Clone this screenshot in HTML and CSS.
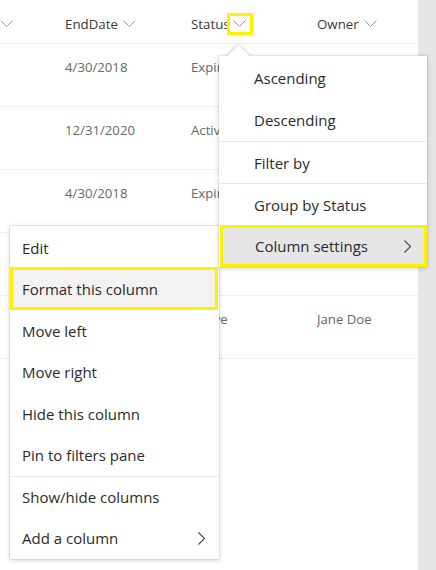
FILE: index.html
```html
<!DOCTYPE html>
<html>
<head>
<meta charset="utf-8">
<link rel="stylesheet" href="styles.css">
</head>
<body>
<div class="page">
  <div class="list">
    <div class="row head">
      <div class="cell first"><svg class="chev" viewBox="0 0 13 7"><polyline points="0.5,0.5 6.5,6.5 12.5,0.5"/></svg></div>
      <div class="cell">EndDate<svg class="chev" viewBox="0 0 13 7"><polyline points="0.5,0.5 6.5,6.5 12.5,0.5"/></svg></div>
      <div class="cell">Status<span class="hl-chev"><svg class="chev" viewBox="0 0 13 7"><polyline points="0.5,0.5 6.5,6.5 12.5,0.5"/></svg></span></div>
      <div class="cell">Owner<svg class="chev" viewBox="0 0 13 7"><polyline points="0.5,0.5 6.5,6.5 12.5,0.5"/></svg></div>
    </div>
    <div class="row data"><div class="cell first"></div><div class="cell">4/30/2018</div><div class="cell">Expired</div><div class="cell"></div></div>
    <div class="row data"><div class="cell first"></div><div class="cell">12/31/2020</div><div class="cell">Active</div><div class="cell"></div></div>
    <div class="row data"><div class="cell first"></div><div class="cell">4/30/2018</div><div class="cell">Expired</div><div class="cell"></div></div>
    <div class="row data"><div class="cell first"></div><div class="cell"></div><div class="cell"></div><div class="cell"></div></div>
    <div class="row data"><div class="cell first"></div><div class="cell"></div><div class="cell">Active</div><div class="cell">Jane Doe</div></div>
  </div>
  <div class="side"></div>

  <div class="menu menu-sort">
    <div class="beak"></div>
    <div class="items">
      <div class="item">Ascending</div>
      <div class="item">Descending</div>
      <div class="item sep">Filter by</div>
      <div class="item sep">Group by Status</div>
      <div class="item active">Column settings<svg class="sub" viewBox="0 0 7 13"><polyline points="0.5,0.5 6.5,6.5 0.5,12.5"/></svg></div>
    </div>
  </div>

  <div class="menu menu-col">
    <div class="item">Edit</div>
    <div class="item focus">Format this column</div>
    <div class="item">Move left</div>
    <div class="item">Move right</div>
    <div class="item">Hide this column</div>
    <div class="item">Pin to filters pane</div>
    <div class="item sep">Show/hide columns</div>
    <div class="item">Add a column<svg class="sub" viewBox="0 0 7 13"><polyline points="0.5,0.5 6.5,6.5 0.5,12.5"/></svg></div>
  </div>
</div>
</body>
</html>
```
FILE: styles.css
```css
html, body {
  margin: 0;
  padding: 0;
  background: #fff;
}
body {
  font-family: "Open Sans", "Noto Sans", sans-serif;
  font-size: 14px;
}
.page {
  position: relative;
  display: flex;
  width: 436px;
  height: 570px;
  overflow: hidden;
}
.list {
  width: 418px;
  flex: none;
}
.side {
  flex: 1;
  background: #e6e6e6;
}
.row {
  display: grid;
  grid-template-columns: 65px 126px 126px 101px;
  border-bottom: 1px solid #eeeeee;
  box-sizing: border-box;
}
.row.head {
  height: 44px;
  align-items: center;
  color: #3a3a3a;
  font-size: 13.3px;
  padding-top: 4px;
}
.row.data {
  height: 63px;
  color: #686868;
  font-size: 13.2px;
  padding-top: 13px;
  line-height: 20px;
}
.cell {
  display: flex;
  align-items: center;
  white-space: nowrap;
  overflow: hidden;
}
.row.data .cell {
  align-items: flex-start;
}
.chev {
  width: 13px;
  height: 7px;
  margin-left: 5px;
  fill: none;
  stroke: #999;
  stroke-width: 1;
}
.first .chev {
  margin-left: 0;
}
.hl-chev {
  display: inline-flex;
  align-items: center;
  justify-content: center;
  width: 26px;
  height: 22px;
  box-sizing: border-box;
  border: 3px solid #fff200;
  margin-left: -3px;
}
.hl-chev .chev {
  margin-left: 0;
}
.menu {
  position: absolute;
  background: #fff;
  box-shadow: 0 0 1px rgba(0,0,0,0.3), 0 1px 5px rgba(0,0,0,0.2);
  color: #2b2b2b;
  font-size: 15px;
}
.menu-sort {
  left: 219px;
  top: 56px;
  width: 208px;
  z-index: 2;
}
.menu-sort .items {
  position: relative;
  background: #fff;
  padding-top: 1px;
}
.beak {
  position: absolute;
  width: 17px;
  height: 17px;
  background: #fff;
  left: 11px;
  top: -8px;
  transform: rotate(45deg);
  box-shadow: 0 0 1px rgba(0,0,0,0.3), 0 1px 5px rgba(0,0,0,0.2);
}
.menu-sort .item {
  height: 42px;
  padding-left: 35px;
}
.menu-col {
  left: 10px;
  top: 226px;
  width: 209px;
  padding: 1px 0 0;
  z-index: 1;
}
.menu-col .item {
  height: 41.4px;
  padding-left: 12px;
}
.item {
  display: flex;
  align-items: center;
  box-sizing: border-box;
  position: relative;
  white-space: nowrap;
}
.item.sep {
  border-top: 1px solid #e6e6e6;
}
.item.active {
  background: #e6e6e6;
  border: 3px solid #fff200;
  padding-left: 32px;
  margin-left: 1px;
}
.item.focus {
  background: #f3f2f1;
  border: 3px solid #fff200;
  padding-left: 9px;
  margin-top: -1px;
  height: 43px;
  width: 208px;
  margin-left: 0;
}
.sub {
  position: absolute;
  right: 14px;
  width: 7px;
  height: 13px;
  fill: none;
  stroke: #444;
  stroke-width: 1.1;
}
.item.active .sub {
  right: 13px;
}
```
